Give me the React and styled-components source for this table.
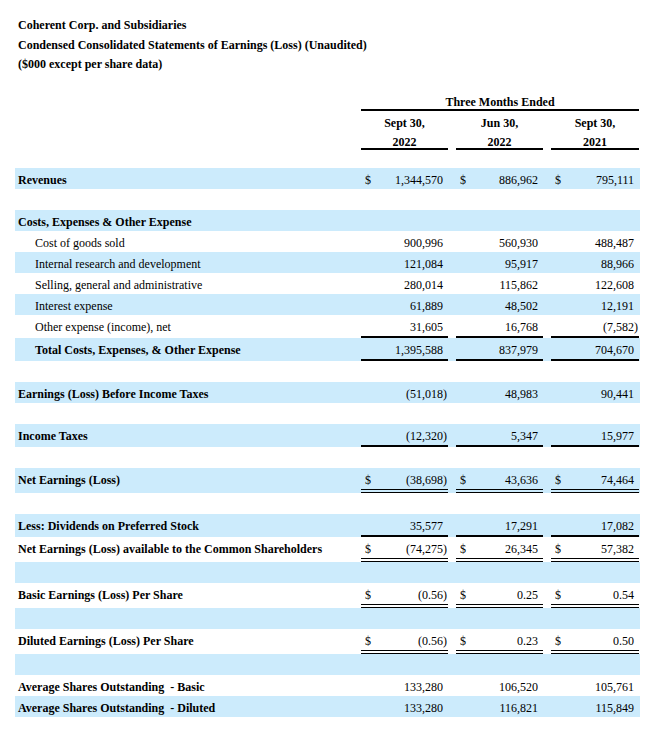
import React from "react";
import styled, { createGlobalStyle, css } from "styled-components";

const Global = createGlobalStyle`
  html, body { margin: 0; padding: 0; background: #fff; }
  body {
    font-family: "Liberation Serif", "Times New Roman", serif;
    font-size: 12px;
    color: #000;
  }
`;

const Page = styled.div`
  width: 625px;
  padding: 16px 13px 24px 15px;
`;

const Titles = styled.div`
  display: flex;
  flex-direction: column;
`;

const TitleLine = styled.div`
  font-weight: bold;
  line-height: 19.5px;
  padding-left: 3px;
`;

const Grid = styled.div`
  display: grid;
  grid-template-columns: 338px 87px 87px 88px;
  column-gap: 8px;
`;

const Header = styled.div`
  margin-top: 17px;
  display: flex;
  flex-direction: column;
`;

const HeadRow = styled(Grid)``;

const HeadCell = styled.div`
  font-weight: bold;
  text-align: center;
  padding-top: ${(p) => p.$pt || 0}px;
  line-height: ${(p) => p.$lh || 18}px;
  ${(p) => p.$span && css`grid-column: 2 / span 3;`}
  ${(p) => p.$rule && css`border-bottom: 2px solid #000;`}
`;

const Body = styled.div`
  margin-top: 18px;
  display: flex;
  flex-direction: column;
`;

const BodyRow = styled(Grid)`
  min-height: 21px;
  &:nth-child(odd) { background: #ccebfc; }
`;

const Label = styled.div`
  padding: 3px 0 0 ${(p) => (p.$indent ? 20 : 3)}px;
  line-height: 18px;
  white-space: pre;
  font-weight: ${(p) => (p.$bold ? "bold" : "normal")};
`;

const ValueCell = styled.div`
  display: flex;
  justify-content: space-between;
  align-items: flex-start;
  padding: 3px 5px 0 4px;
  line-height: 18px;
  ${(p) => p.$rule === "single" && css`border-bottom: 2px solid #000;`}
  ${(p) => p.$rule === "double" && css`border-bottom: 4px double #000;`}
`;

const Dollar = styled.span``;

const Num = styled.span`
  margin-right: ${(p) => (p.$neg ? -4 : 0)}px;
`;

const rows = [
  { label: "Revenues", bold: true, dollar: true, v: ["1,344,570", "886,962", "795,111"] },
  { spacer: true },
  { label: "Costs, Expenses & Other Expense", bold: true },
  { label: "Cost of goods sold", indent: true, v: ["900,996", "560,930", "488,487"] },
  { label: "Internal research and development", indent: true, v: ["121,084", "95,917", "88,966"] },
  { label: "Selling, general and administrative", indent: true, v: ["280,014", "115,862", "122,608"] },
  { label: "Interest expense", indent: true, v: ["61,889", "48,502", "12,191"] },
  { label: "Other expense (income), net", indent: true, rule: "single", v: ["31,605", "16,768", "(7,582)"] },
  { label: "Total Costs, Expenses, & Other Expense", bold: true, indent: true, rule: "single", v: ["1,395,588", "837,979", "704,670"] },
  { spacer: true },
  { label: "Earnings (Loss) Before Income Taxes", bold: true, v: ["(51,018)", "48,983", "90,441"] },
  { spacer: true },
  { label: "Income Taxes", bold: true, rule: "single", v: ["(12,320)", "5,347", "15,977"] },
  { spacer: true },
  { label: "Net Earnings (Loss)", bold: true, dollar: true, rule: "double", v: ["(38,698)", "43,636", "74,464"] },
  { spacer: true },
  { label: "Less: Dividends on Preferred Stock", bold: true, rule: "single", v: ["35,577", "17,291", "17,082"] },
  { label: "Net Earnings (Loss) available to the Common Shareholders", bold: true, dollar: true, rule: "double", v: ["(74,275)", "26,345", "57,382"] },
  { spacer: true },
  { label: "Basic Earnings (Loss) Per Share", bold: true, dollar: true, rule: "double", v: ["(0.56)", "0.25", "0.54"] },
  { spacer: true },
  { label: "Diluted Earnings (Loss) Per Share", bold: true, dollar: true, rule: "double", v: ["(0.56)", "0.23", "0.50"] },
  { spacer: true },
  { label: "Average Shares Outstanding  - Basic", bold: true, v: ["133,280", "106,520", "105,761"] },
  { label: "Average Shares Outstanding  - Diluted", bold: true, v: ["133,280", "116,821", "115,849"] },
];

export default function App() {
  return (
    <>
      <Global />
      <Page>
        <Titles>
          <TitleLine>Coherent Corp. and Subsidiaries</TitleLine>
          <TitleLine>Condensed Consolidated Statements of Earnings (Loss) (Unaudited)</TitleLine>
          <TitleLine>($000 except per share data)</TitleLine>
        </Titles>
        <Header>
          <HeadRow>
            <div />
            <HeadCell $span $rule $pt={4} $lh={13}>Three Months Ended</HeadCell>
          </HeadRow>
          <HeadRow>
            <div />
            <HeadCell $pt={4} $lh={16}>Sept 30,</HeadCell>
            <HeadCell $pt={4} $lh={16}>Jun 30,</HeadCell>
            <HeadCell $pt={4} $lh={16}>Sept 30,</HeadCell>
          </HeadRow>
          <HeadRow>
            <div />
            <HeadCell $rule $pt={5} $lh={12}>2022</HeadCell>
            <HeadCell $rule $pt={5} $lh={12}>2022</HeadCell>
            <HeadCell $rule $pt={5} $lh={12}>2021</HeadCell>
          </HeadRow>
        </Header>
        <Body>
          {rows.map((r, i) =>
            r.spacer ? (
              <BodyRow key={i} />
            ) : (
              <BodyRow key={i}>
                <Label $bold={r.bold} $indent={r.indent}>{r.label}</Label>
                {r.v &&
                  r.v.map((val, j) => (
                    <ValueCell key={j} $rule={r.rule}>
                      <Dollar>{r.dollar ? "$" : ""}</Dollar>
                      <Num $neg={val.startsWith("(")}>{val}</Num>
                    </ValueCell>
                  ))}
              </BodyRow>
            )
          )}
        </Body>
      </Page>
    </>
  );
}
